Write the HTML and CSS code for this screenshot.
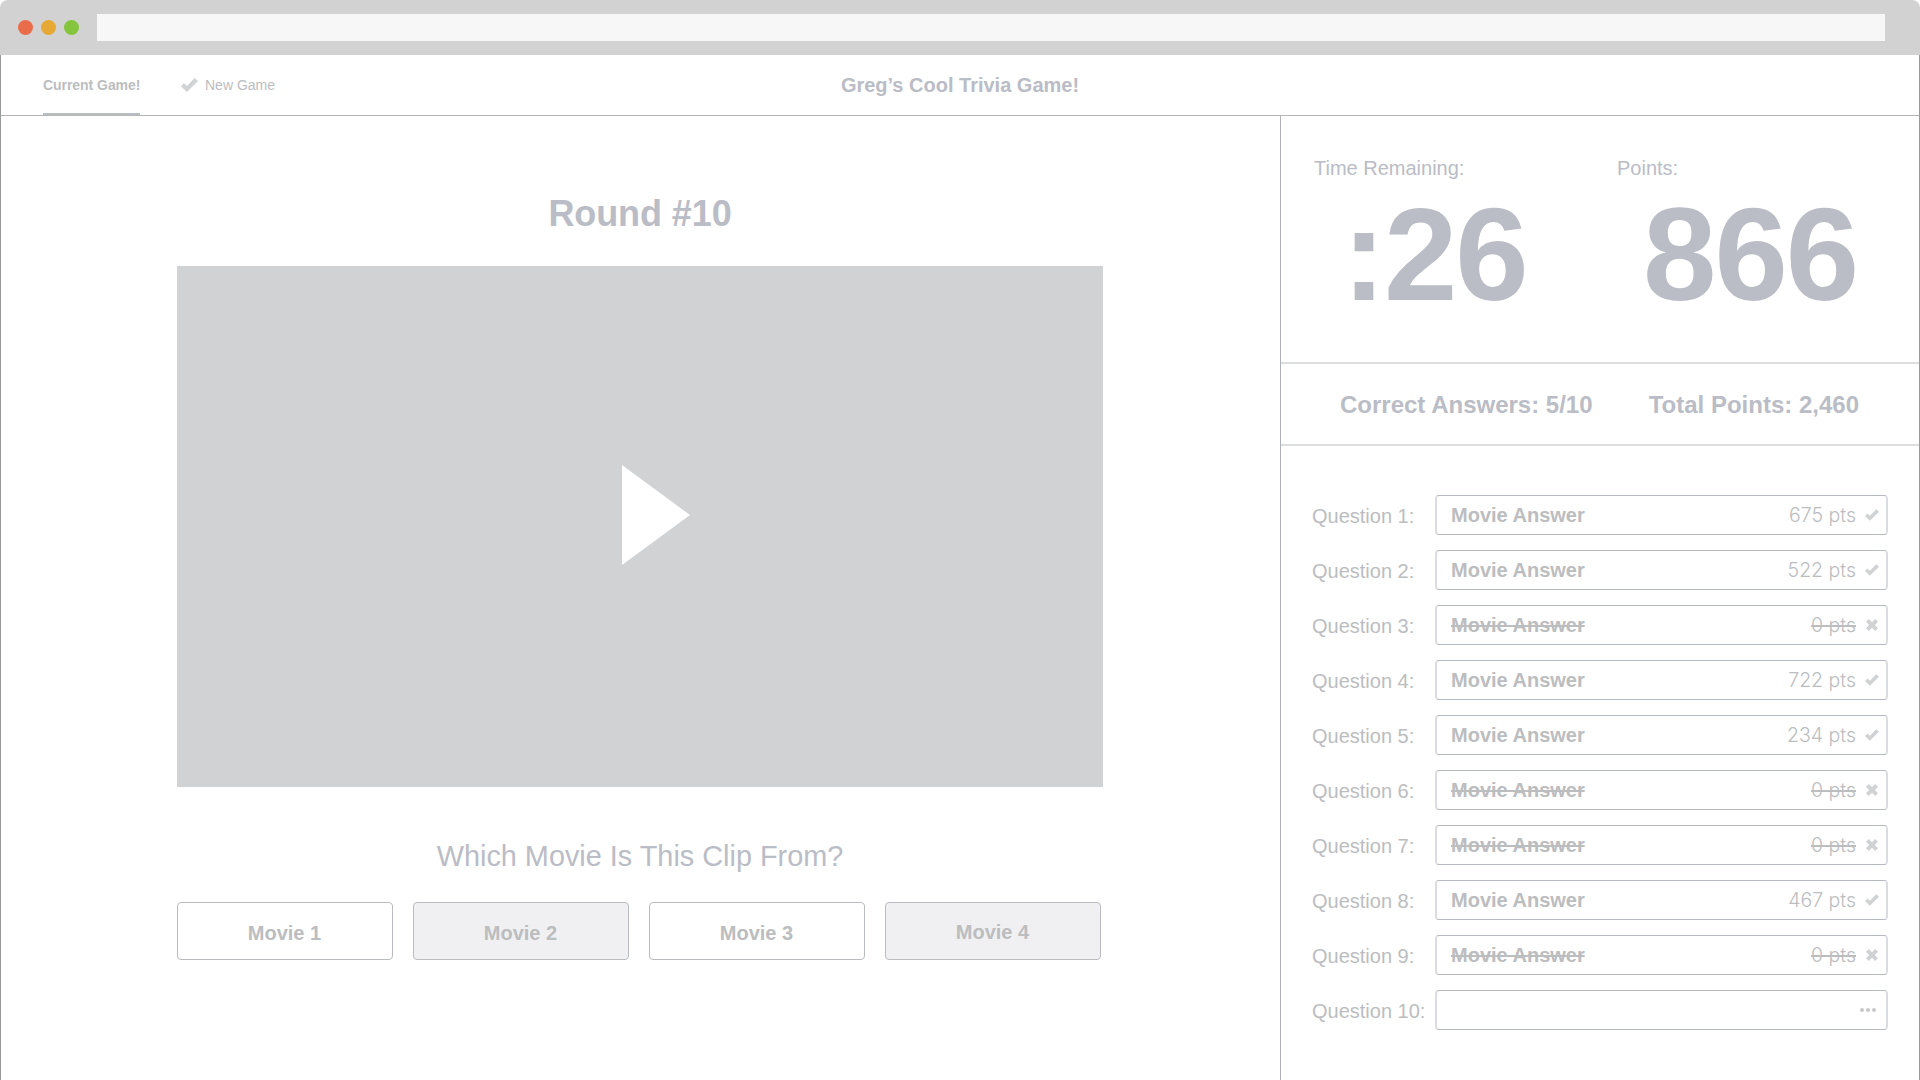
FILE: index.html
```
<!DOCTYPE html>
<html lang="en">
<head>
<meta charset="utf-8">
<title>Greg’s Cool Trivia Game!</title>
<link rel="stylesheet" href="styles.css">
</head>
<body>
<svg class="defs" width="0" height="0" aria-hidden="true">
  <symbol id="check" viewBox="0 0 17 14"><path d="M0 8.2 2.9 5.2 6 8 13.6 0 17 3.1 5.9 14Z"/></symbol>
  <symbol id="cross" viewBox="0 0 12 12"><path d="M2.8 0 6 3.2 9.2 0 12 2.8 8.8 6 12 9.2 9.2 12 6 8.8 2.8 12 0 9.2 3.2 6 0 2.8Z"/></symbol>
  <symbol id="dots" viewBox="0 0 16 4"><circle cx="2" cy="2" r="2"/><circle cx="8" cy="2" r="2"/><circle cx="14" cy="2" r="2"/></symbol>
</svg>
<div class="window">
  <div class="chrome">
    <span class="light red"></span><span class="light amber"></span><span class="light green"></span>
    <div class="address"></div>
  </div>
  <div class="page">
    <header class="header">
      <nav class="tabs">
        <a class="tab active">Current Game!</a>
        <a class="tab"><svg class="tab-icon"><use href="#check"/></svg>New Game</a>
      </nav>
      <h1 class="title">Greg’s Cool Trivia Game!</h1>
    </header>
    <div class="body">
      <main class="main">
        <h2 class="round">Round #10</h2>
        <div class="video"><svg class="play" viewBox="0 0 68 100"><path d="M0 0 68 50 0 100Z"/></svg></div>
        <p class="prompt">Which Movie Is This Clip From?</p>
        <div class="choices">
          <button class="choice">Movie 1</button>
          <button class="choice shaded">Movie 2</button>
          <button class="choice">Movie 3</button>
          <button class="choice shaded last">Movie 4</button>
        </div>
      </main>
      <aside class="sidebar">
        <section class="stats">
          <div class="stat time"><span class="label">Time Remaining:</span><span class="value">:26</span></div>
          <div class="stat points"><span class="label">Points:</span><span class="value">866</span></div>
        </section>
        <section class="totals"><span>Correct Answers: 5/10</span><span>Total Points: 2,460</span></section>
        <section class="questions">
          <div class="row"><span class="q">Question 1:</span><div class="answer"><b>Movie Answer</b><span class="pts">675 pts</span><svg class="check"><use href="#check"/></svg></div></div>
          <div class="row"><span class="q">Question 2:</span><div class="answer"><b>Movie Answer</b><span class="pts">522 pts</span><svg class="check"><use href="#check"/></svg></div></div>
          <div class="row"><span class="q">Question 3:</span><div class="answer wrong"><b>Movie Answer</b><span class="pts">0 pts</span><svg class="cross"><use href="#cross"/></svg></div></div>
          <div class="row"><span class="q">Question 4:</span><div class="answer"><b>Movie Answer</b><span class="pts">722 pts</span><svg class="check"><use href="#check"/></svg></div></div>
          <div class="row"><span class="q">Question 5:</span><div class="answer"><b>Movie Answer</b><span class="pts">234 pts</span><svg class="check"><use href="#check"/></svg></div></div>
          <div class="row"><span class="q">Question 6:</span><div class="answer wrong"><b>Movie Answer</b><span class="pts">0 pts</span><svg class="cross"><use href="#cross"/></svg></div></div>
          <div class="row"><span class="q">Question 7:</span><div class="answer wrong"><b>Movie Answer</b><span class="pts">0 pts</span><svg class="cross"><use href="#cross"/></svg></div></div>
          <div class="row"><span class="q">Question 8:</span><div class="answer"><b>Movie Answer</b><span class="pts">467 pts</span><svg class="check"><use href="#check"/></svg></div></div>
          <div class="row"><span class="q">Question 9:</span><div class="answer wrong"><b>Movie Answer</b><span class="pts">0 pts</span><svg class="cross"><use href="#cross"/></svg></div></div>
          <div class="row"><span class="q">Question 10:</span><div class="answer"><svg class="dots"><use href="#dots"/></svg></div></div>
        </section>
      </aside>
    </div>
  </div>
</div>
</body>
</html>
```
FILE: styles.css
```
* { box-sizing: border-box; }
body {
  margin: 0;
  background: #fff;
  color: #bbbdbf;
  font-family: "Liberation Sans", Arial, sans-serif;
  font-size: 20px;
}
h1, h2, p { margin: 0; }
svg { display: block; flex: none; fill: #d0d2d3; }
.defs { position: absolute; }
.window { display: flex; flex-direction: column; height: 1080px; overflow: hidden; }

/* Browser chrome */
.chrome {
  display: flex;
  align-items: center;
  gap: 8px;
  flex: none;
  height: 55px;
  padding: 0 35px 0 18px;
  background: #d2d2d2;
  border-radius: 8px 8px 0 0;
}
.light { width: 15px; height: 15px; border-radius: 50%; }
.red { background: #ea6d4b; }
.amber { background: #e6a935; }
.green { background: #85c43d; }
.address { flex: 1; height: 27px; margin-left: 10px; background: #f7f7f7; }

.page {
  display: flex;
  flex-direction: column;
  flex: 1;
  border: solid #98999b;
  border-width: 0 1px;
}

/* Header */
.header {
  display: grid;
  grid-template-columns: 1fr auto 1fr;
  flex: none;
  height: 61px;
  padding-left: 42px;
  border-bottom: 1px solid #b4b6b9;
}
.tabs { display: flex; gap: 41px; font-size: 14px; }
.tab { display: flex; align-items: center; height: 60px; }
.tab.active { width: 97px; padding-top: 2px; border-bottom: 2px solid #b8bdc1; font-weight: bold; white-space: nowrap; letter-spacing: -0.05px; }
.tab-icon { width: 17px; height: 14px; margin-right: 7px; }
.title { padding-right: 42px; color: #babcc6; font-size: 20px; line-height: 60px; }

.body { display: flex; flex: 1; }

/* Current round */
.main {
  display: flex;
  flex-direction: column;
  align-items: center;
  width: 1279px;
  padding: 78px 1px 0 0;
  color: #babcc6;
}
.round { font-size: 36px; line-height: 40px; letter-spacing: -0.1px; }
.video {
  display: flex;
  align-items: center;
  justify-content: center;
  width: 926px;
  height: 521px;
  margin-top: 32px;
  padding: 0 0 23px 31px;
  background: #d1d2d4;
}
.play { width: 68px; height: 100px; fill: #fff; }
.prompt { margin-top: 51px; font-size: 28.85px; line-height: 36px; }
.choices { display: flex; gap: 20px; width: 924px; margin: 28px 2px 0 0; }
.choice {
  flex: 1;
  height: 58px;
  padding: 4px 1px 0 0;
  border: 1px solid #b9bbbf;
  border-radius: 4px;
  background: #fff;
  color: #bbbdbf;
  font: bold 20px "Liberation Sans", Arial, sans-serif;
}
.choice.shaded { background: #f0f0f2; }
.choice.last { padding-top: 2px; }

/* Sidebar */
.sidebar { flex: 1; border-left: 1px solid #b0b2b9; }
.stats {
  display: grid;
  grid-template-columns: 303px 1fr;
  height: 248px;
  padding: 40px 0 0 33px;
  border-bottom: 2px solid #dcddde;
  color: #babcc6;
}
.stat { display: flex; flex-direction: column; }
.label { line-height: 24px; }
.value { font-size: 132px; font-weight: bold; line-height: 150px; letter-spacing: -2px; }
.time .value { padding-left: 28px; }
.points .value { padding-left: 26px; }
.totals {
  display: flex;
  justify-content: space-between;
  height: 82px;
  padding: 0 60px 0 59px;
  border-bottom: 2px solid #dcddde;
  color: #babcc6;
  font-size: 24px;
  font-weight: bold;
  line-height: 82px;
}
.questions { display: flex; flex-direction: column; gap: 15px; padding: 49px 31px 0 31px; }
.row { display: flex; height: 40px; }
.q { width: 123px; padding-top: 1px; line-height: 40px; white-space: nowrap; }
.answer {
  display: flex;
  align-items: center;
  flex: 1;
  padding: 0 7px 0 14px;
  border: solid;
  border-width: 1px 2px;
  border-color: #b7b9c0 #dbdce0;
  border-radius: 4px;
}
.pts { margin-left: auto; margin-right: 9px; font-family: Inter, "Liberation Sans", sans-serif; font-weight: 300; font-size: 19.5px; }
.check { width: 14px; height: 12px; }
.cross { width: 12px; height: 12px; margin-right: 1px; }
.wrong .pts { margin-right: 10px; }
.wrong b, .wrong .pts { text-decoration: line-through 2px; }
.dots { width: 16px; height: 4px; margin-left: auto; margin-right: 3px; fill: #c6c8ca; }
```
